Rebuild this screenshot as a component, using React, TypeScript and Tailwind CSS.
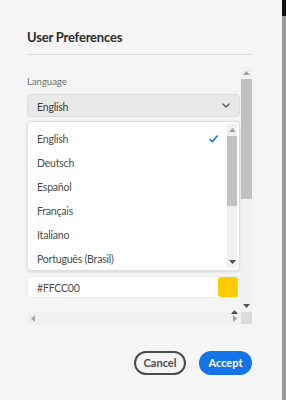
import React from "react";

const languages = ["English", "Deutsch", "Español", "Français", "Italiano", "Português (Brasil)"];

function TriUp({ className = "" }: { className?: string }) {
  return (
    <svg width="7" height="4" viewBox="0 0 7 4" className={className}>
      <path d="M0 4 L3.5 0 L7 4 Z" fill="currentColor" />
    </svg>
  );
}
function TriDown({ className = "" }: { className?: string }) {
  return (
    <svg width="7" height="4" viewBox="0 0 7 4" className={className}>
      <path d="M0 0 L3.5 4 L7 0 Z" fill="currentColor" />
    </svg>
  );
}
function TriLeft({ className = "" }: { className?: string }) {
  return (
    <svg width="4" height="7" viewBox="0 0 4 7" className={className}>
      <path d="M4 0 L0 3.5 L4 7 Z" fill="currentColor" />
    </svg>
  );
}
function TriRight({ className = "" }: { className?: string }) {
  return (
    <svg width="4" height="7" viewBox="0 0 4 7" className={className}>
      <path d="M0 0 L4 3.5 L0 7 Z" fill="currentColor" />
    </svg>
  );
}

export default function App() {
  return (
    <div
      className="flex w-[286px] h-[400px] bg-[#f5f5f5] overflow-hidden"
      style={{ fontFamily: "Lato, 'Open Sans', sans-serif" }}
    >
      <div className="flex-1 flex flex-col pl-[27px] pr-[30px]">
        <div className="pt-[29px] text-[13px] leading-[16px] font-bold text-[#2c2c2c] tracking-[-0.2px]">User Preferences</div>
        <div className="mt-[9px] h-px bg-[#dadada]" />
        <div className="mt-[12px] flex flex-col">
          <div className="flex h-[245px]">
            <div className="w-[214px] flex flex-col">
              <div className="pt-[9px] text-[9.5px] leading-[12px] text-[#707070]">Language</div>
              <div className="mt-[6px] w-[213px] h-[23px] rounded-[4px] border border-[#dcdcdc] bg-[#e9e9e9] flex items-center justify-between pl-[9px] pr-[9px]">
                <span className="text-[10.5px] leading-[14px] pt-[2px] text-[#3a3a3a] tracking-[-0.2px]">English</span>
                <svg width="8" height="5" viewBox="0 0 8 5">
                  <path d="M1 1 L4 4 L7 1" fill="none" stroke="#505050" strokeWidth="1.3" strokeLinecap="round" strokeLinejoin="round" />
                </svg>
              </div>
              <div className="mt-[4px] w-[213px] h-[150px] rounded-[4px] border border-[#dedede] bg-white shadow-[0_1px_3px_rgba(0,0,0,0.12)] flex overflow-hidden">
                <div className="flex-1 flex flex-col pt-[5px]">
                  {languages.map((l, i) => (
                    <div key={l} className="h-[24px] shrink-0 flex items-center justify-between pl-[9px] pr-[9px]">
                      <span className="text-[10.5px] leading-[14px] text-[#4b4b4b] tracking-[-0.2px]">{l}</span>
                      {i === 0 && (
                        <svg width="9" height="8" viewBox="0 0 9 8">
                          <path d="M1 4.5 L3.3 6.8 L8 1" fill="none" stroke="#1473e6" strokeWidth="1.6" strokeLinecap="round" strokeLinejoin="round" />
                        </svg>
                      )}
                    </div>
                  ))}
                </div>
                <div className="w-[10px] mr-[2px] my-[2px] bg-[#f1f1f1] flex flex-col items-center">
                  <div className="h-[12px] flex items-center justify-center text-[#a3a3a3]">
                    <TriUp />
                  </div>
                  <div className="w-[10px] h-[70px] bg-[#c1c1c1]" />
                  <div className="flex-1" />
                  <div className="h-[12px] flex items-center justify-center text-[#505050]">
                    <TriDown />
                  </div>
                </div>
              </div>
              <div className="mt-[5px] w-[213px] h-[22px] rounded-[3px] border border-[#ececec] bg-white flex items-center justify-between pl-[9px] pr-[1px]">
                <span className="text-[10.5px] leading-[14px] pt-[1px] text-[#4b4b4b] tracking-[-0.2px]">#FFCC00</span>
                <div className="w-[20px] h-[20px] rounded-[3px] bg-[#ffcc00]" />
              </div>
            </div>
            <div className="w-[11px] bg-[#f1f1f1] flex flex-col items-center">
              <div className="h-[12px] flex items-center justify-center text-[#a3a3a3]">
                <TriUp />
              </div>
              <div className="w-[11px] h-[120px] bg-[#c1c1c1]" />
              <div className="flex-1" />
              <div className="h-[12px] flex items-center justify-center text-[#505050]">
                <TriDown />
              </div>
            </div>
          </div>
          <div className="flex h-[12px]">
            <div className="w-[214px] bg-[#f1f1f1] flex items-center justify-between px-[4px] relative">
              <TriLeft className="text-[#a3a3a3]" />
              <TriRight className="text-[#a3a3a3]" />
              <TriUp className="absolute right-[3px] -top-[2px] text-[#505050]" />
            </div>
            <div className="w-[11px] bg-[#dcdcdc]" />
          </div>
        </div>
        <div className="mt-[27px] flex justify-end gap-[13px]">
          <button className="w-[52px] h-[24px] rounded-full border-2 border-[#4b4b4b] text-[#4b4b4b] text-[11px] font-bold flex items-center justify-center">
            Cancel
          </button>
          <button className="w-[53px] h-[24px] rounded-full bg-[#1473e6] text-white text-[11px] font-bold flex items-center justify-center">
            Accept
          </button>
        </div>
      </div>
      <div className="w-[4px] flex flex-col">
        <div className="h-[16px] bg-[#111111]" />
        <div className="flex-1 bg-[#9a9a9a]" />
      </div>
    </div>
  );
}
